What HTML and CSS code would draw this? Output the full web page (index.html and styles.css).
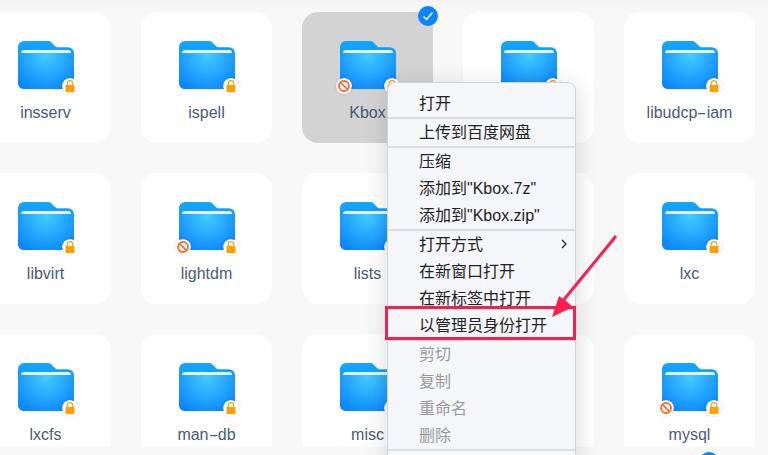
FILE: index.html
```html
<!DOCTYPE html>
<html lang="zh">

<head>
  <meta charset="UTF-8">
  <title>Files</title>
  <link rel="stylesheet" href="styles.css">
</head>

<body>
  <svg class="defs" width="0" height="0">
    <defs>
      <radialGradient id="folderFill" gradientUnits="userSpaceOnUse" cx="28" cy="14" r="38">
        <stop offset="0" stop-color="#44ccff" />
        <stop offset="1" stop-color="#0a87ff" />
      </radialGradient>
      <linearGradient id="folderTab" x1="0" y1="0" x2="0" y2="1">
        <stop offset="0" stop-color="#12a6ff" />
        <stop offset="1" stop-color="#0a8cff" />
      </linearGradient>
      <symbol id="folder" viewBox="0 0 56 48">
        <path d="M0 6a6 6 0 0 1 6-6h24c2 0 3 .8 4 2l3 3c.8.8 1.6 1.300 3 1.300h10a6 6 0 0 1 6 6V42a6 6 0 0 1-6 6H6a6 6 0 0 1-6-6z" fill="url(#folderTab)" />
        <path d="M0 12h56v30a6 6 0 0 1-6 6H6a6 6 0 0 1-6-6z" fill="url(#folderFill)" />
        <path d="M3 12a3 3 0 0 1 3-3h44a3 3 0 0 1 3 3z" fill="#e3f4ff" />
      </symbol>
      <symbol id="lock" viewBox="0 0 16 16">
        <circle cx="8" cy="8" r="8" fill="#fff" />
        <path d="M5.200 7.500V5.500a2.800 2.800 0 0 1 5.600 0v2" fill="none" stroke="#ff9f00" stroke-width="1.200" />
        <rect x="3.500" y="7" width="9" height="7" rx=".8" fill="#ff9f00" />
      </symbol>
      <symbol id="ban" viewBox="0 0 16 16">
        <circle cx="8" cy="8" r="8" fill="#fff" />
        <circle cx="8" cy="8" r="5" fill="none" stroke="#ff6a2b" stroke-width="1.800" />
        <path d="M4.600 4.600l6.800 6.800" stroke="#ff6a2b" stroke-width="1.800" />
      </symbol>
    </defs>
  </svg>

  <div class="grid">
    <div class="card"><div class="thumb"><svg class="folder"><use href="#folder" /></svg><svg class="badge lock"><use href="#lock" /></svg></div><span>insserv</span></div>
    <div class="card"><div class="thumb"><svg class="folder"><use href="#folder" /></svg><svg class="badge lock"><use href="#lock" /></svg></div><span>ispell</span></div>
    <div class="card selected"><div class="thumb"><svg class="folder"><use href="#folder" /></svg><svg class="badge ban"><use href="#ban" /></svg><svg class="badge lock"><use href="#lock" /></svg></div><span>Kbox</span>
      <svg class="check" viewBox="0 0 20 20"><circle cx="10" cy="10" r="10" fill="#0a84ff" /><path d="M5.500 10.500l3 3 6-7" fill="none" stroke="#fff" stroke-width="1.500" /></svg>
    </div>
    <div class="card"><div class="thumb"><svg class="folder"><use href="#folder" /></svg><svg class="badge lock"><use href="#lock" /></svg></div><span>libnss</span></div>
    <div class="card"><div class="thumb"><svg class="folder"><use href="#folder" /></svg><svg class="badge lock"><use href="#lock" /></svg></div><span>libudcp<i class="dash">-</i>iam</span></div>

    <div class="card"><div class="thumb"><svg class="folder"><use href="#folder" /></svg><svg class="badge lock"><use href="#lock" /></svg></div><span>libvirt</span></div>
    <div class="card"><div class="thumb"><svg class="folder"><use href="#folder" /></svg><svg class="badge ban"><use href="#ban" /></svg><svg class="badge lock"><use href="#lock" /></svg></div><span>lightdm</span></div>
    <div class="card"><div class="thumb"><svg class="folder"><use href="#folder" /></svg><svg class="badge lock"><use href="#lock" /></svg></div><span>lists</span></div>
    <div class="card"><div class="thumb"><svg class="folder"><use href="#folder" /></svg><svg class="badge lock"><use href="#lock" /></svg></div><span>logs</span></div>
    <div class="card"><div class="thumb"><svg class="folder"><use href="#folder" /></svg><svg class="badge lock"><use href="#lock" /></svg></div><span>lxc</span></div>

    <div class="card"><div class="thumb"><svg class="folder"><use href="#folder" /></svg><svg class="badge lock"><use href="#lock" /></svg></div><span>lxcfs</span></div>
    <div class="card"><div class="thumb"><svg class="folder"><use href="#folder" /></svg><svg class="badge lock"><use href="#lock" /></svg></div><span>man<i class="dash">-</i>db</span></div>
    <div class="card"><div class="thumb"><svg class="folder"><use href="#folder" /></svg><svg class="badge lock"><use href="#lock" /></svg></div><span>misc</span></div>
    <div class="card"><div class="thumb"><svg class="folder"><use href="#folder" /></svg><svg class="badge lock"><use href="#lock" /></svg></div><span>mono</span></div>
    <div class="card"><div class="thumb"><svg class="folder"><use href="#folder" /></svg><svg class="badge ban"><use href="#ban" /></svg><svg class="badge lock"><use href="#lock" /></svg></div><span>mysql</span></div>
  </div>

  <div class="dot"></div>

  <ul class="menu">
    <li>打开</li>
    <li class="sep"></li>
    <li>上传到百度网盘</li>
    <li class="sep"></li>
    <li>压缩</li>
    <li>添加到"Kbox.7z"</li>
    <li>添加到"Kbox.zip"</li>
    <li class="sep"></li>
    <li class="more">打开方式<svg viewBox="0 0 6 10"><path d="M1 1l4 4-4 4" fill="none" stroke="#222" stroke-width="1.200" /></svg></li>
    <li>在新窗口打开</li>
    <li>在新标签中打开</li>
    <li>以管理员身份打开</li>
    <li class="sep"></li>
    <li class="off">剪切</li>
    <li class="off">复制</li>
    <li class="off">重命名</li>
    <li class="off">删除</li>
    <li class="sep"></li>
  </ul>

  <div class="mark"></div>
  <svg class="arrow" viewBox="0 0 768 455">
    <path d="M616 236L562 302" stroke="#f9204f" stroke-width="3" fill="none" />
    <path d="M552 317L559 296L566 301L573 307z" fill="#f9204f" />
  </svg>
</body>

</html>
```

FILE: styles.css
```css
* {
  padding: 0;
  margin: 0;
  list-style: none;
  box-sizing: border-box;
}

html,
body {
  height: 100%;
  overflow: hidden;
}

body {
  background: linear-gradient(#f4f4f4 0, #f8f8f8 10px);
  font-family: "Liberation Sans", "Noto Sans CJK SC", sans-serif;
  position: relative;
}

.defs {
  display: block;
  height: 0;
}

.grid {
  display: grid;
  grid-template-columns: repeat(5, 131px);
  grid-auto-rows: 131px;
  gap: 30px;
  margin: 12px 0 0 -20px;
  height: 435px;
  clip-path: inset(-12px 0 0 0);
}

.card {
  background-color: #fff;
  border-radius: 16px;
  display: flex;
  flex-direction: column;
  align-items: center;
  padding-top: 29px;
  position: relative;
  font-size: 16px;
  line-height: 20px;
  color: #4a5a78;
}

.card.selected {
  background-color: #d3d3d3;
}

.dash {
  display: inline-block;
  font-style: normal;
  margin: 0 2px;
  transform: scaleX(1.8);
}

.thumb {
  width: 56px;
  height: 48px;
  position: relative;
  margin-bottom: 14px;
}

.folder {
  width: 56px;
  height: 48px;
  display: block;
}

.badge {
  position: absolute;
  width: 16px;
  height: 16px;
  top: 37px;
  border-radius: 50%;
  box-shadow: 0 0 3px rgba(0, 0, 0, 0.15);
}

.badge.lock {
  right: -4px;
}

.badge.ban {
  left: -4px;
}

.check {
  position: absolute;
  width: 20px;
  height: 20px;
  top: -6px;
  right: -5px;
}

.dot {
  position: absolute;
  left: 699px;
  top: 452px;
  width: 20px;
  height: 20px;
  border-radius: 50%;
  background-color: #0a84ff;
}

.menu {
  position: absolute;
  left: 387px;
  top: 82px;
  width: 189px;
  height: 390px;
  padding-top: 7px;
  background-color: #f4f6fa;
  border: 1px solid #d4d4d6;
  border-radius: 8px;
  box-shadow: 0 4px 24px rgba(0, 0, 0, 0.15);
  font-size: 16px;
  color: #222;
}

.menu li {
  height: 27px;
  line-height: 27px;
  padding-left: 31px;
  position: relative;
}

.menu li.sep {
  height: 2px;
  padding: 0;
  background-color: #dcdcde;
}

.menu li.off {
  color: #999;
}

.more svg {
  position: absolute;
  right: 8px;
  top: 8px;
  width: 6px;
  height: 10px;
}

.mark {
  position: absolute;
  left: 385px;
  top: 306px;
  width: 191px;
  height: 34px;
  border: 3px solid #f4204f;
}

.arrow {
  position: absolute;
  left: 0;
  top: 0;
  width: 768px;
  height: 455px;
}
```
